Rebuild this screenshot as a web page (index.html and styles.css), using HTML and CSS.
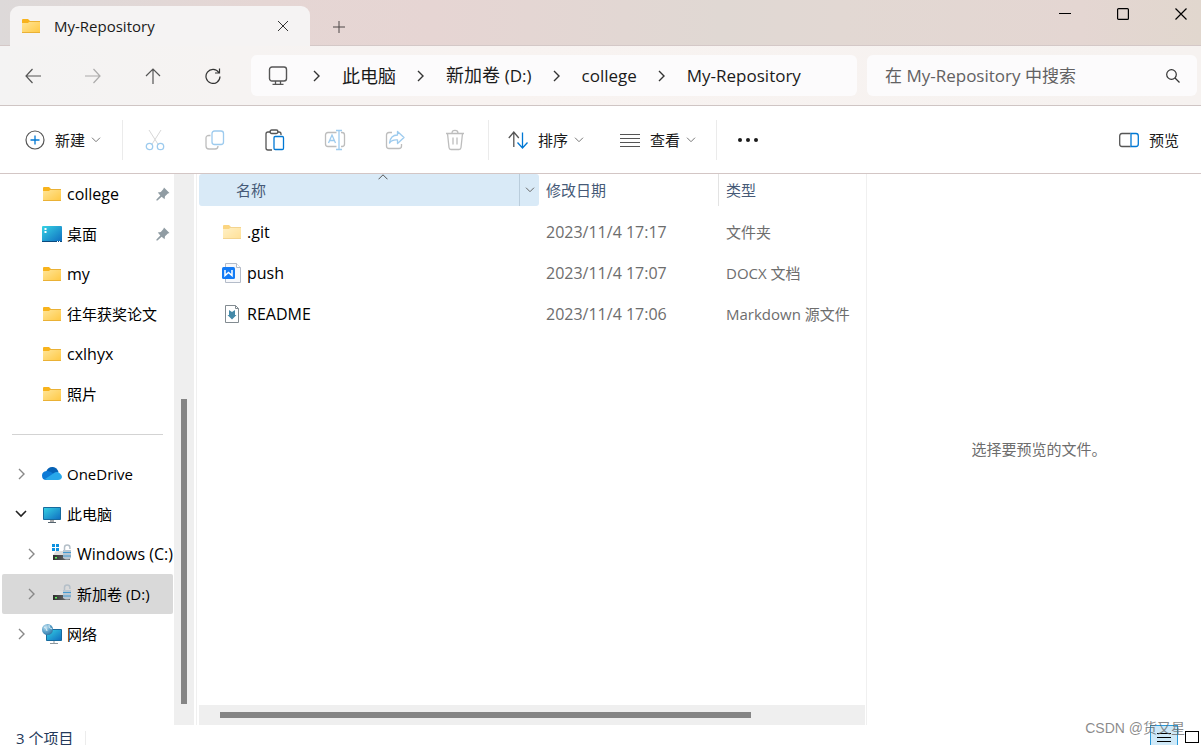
FILE: index.html
```
<!DOCTYPE html>
<html lang="zh-CN">
<head>
<meta charset="utf-8">
<title>My-Repository</title>
<link rel="stylesheet" href="styles.css">
</head>
<body>
<svg class="defs" aria-hidden="true">
  <defs>
    <linearGradient id="gFolder" x1="0" y1="0" x2="1" y2="1"><stop offset="0" stop-color="#ffe69a"/><stop offset="1" stop-color="#ffc843"/></linearGradient>
    <linearGradient id="gBlue" x1="0" y1="0" x2="1" y2="1"><stop offset="0" stop-color="#36d3e4"/><stop offset="1" stop-color="#0f6cc0"/></linearGradient>
    <linearGradient id="gDrive" x1="0" y1="0" x2="1" y2="0"><stop offset="0" stop-color="#2d2d2d"/><stop offset="1" stop-color="#777"/></linearGradient>
    <radialGradient id="gGlobe" cx=".35" cy=".3" r=".8"><stop offset="0" stop-color="#c9e4f2"/><stop offset=".5" stop-color="#5fa4cb"/><stop offset="1" stop-color="#2b6f9f"/></radialGradient>
    <symbol id="folder" viewBox="0 0 20 20"><path d="M1 4q0-1 1-1h5l2 2v3H1z" fill="#f8b31c"/><path d="M1 7h6l2-2h10v12H1z" fill="url(#gFolder)"/><path d="M8 5.5h11M1 16.5h18" stroke="#eab135" fill="none"/></symbol>
    <symbol id="chev" viewBox="0 0 8 12"><path d="M1 1l5 5-5 5" fill="none" stroke="currentColor" stroke-width="1.4"/></symbol>
    <symbol id="down" viewBox="0 0 10 6"><path d="M1 .7l4 4 4-4" fill="none" stroke="currentColor"/></symbol>
    <symbol id="pin" viewBox="0 0 14 14"><path d="M8 .5L13.5 6l-1.6.6L9 9.2l-.4 3L5.6 9.7 1.5 13.6.4 13.6.4 12.5 4.3 8.4 1.8 5.4l3-.4L7.400 2z" fill="#909ca3"/></symbol>
    <symbol id="lock" viewBox="0 0 10 17"><path d="M2.500 7V3.500q0-2.500 2.700-2.500t2.700 2.500V5" fill="none" stroke="#b4bfc8" stroke-width="1.500"/><path d="M1 6h8v8q-4 3-8 0z" fill="#b9c7d3"/><path d="M1 8.500h8M1 12h8" stroke="#459ad0"/></symbol>
    <symbol id="drive" viewBox="0 0 20 20"><path d="M4 7h12l3 4H1z" fill="#dedede"/><path d="M1 11h17v5H1z" fill="url(#gDrive)"/><path d="M3 13h2v1.500H3z" fill="#5ff35f"/><use href="#lock" x="10" y="0" width="10" height="17"/></symbol>
    <symbol id="monitor" viewBox="0 0 20 20"><path d="M1.500 3.500h17v12h-17z" fill="url(#gBlue)" stroke="#176a9e"/><path d="M8 16h4v2H8z" fill="#aaa"/><path d="M6 18.500h8" stroke="#54636e"/></symbol>
  </defs>
</svg>
<div class="window">
  <header class="titlebar">
    <div class="tab">
      <svg class="i20"><use href="#folder"/></svg>
      <span class="tab-title">My-Repository</span>
      <button class="plain tab-close" aria-label="关闭标签页"><svg width="12" height="12" viewBox="0 0 12 12"><path d="M1 1l10 10M11 1L1 11" stroke="#333" fill="none"/></svg></button>
    </div>
    <button class="plain tab-new" aria-label="新标签页"><svg width="12" height="12" viewBox="0 0 12 12"><path d="M6 0v12M0 6h12" stroke="#4d4647" fill="none"/></svg></button>
    <div class="controls">
      <button class="plain" aria-label="最小化"><svg width="12" height="12" viewBox="0 0 12 12"><path d="M0 5.500h12" stroke="#000"/></svg></button>
      <button class="plain" aria-label="最大化"><svg width="12" height="12" viewBox="0 0 12 12"><rect x=".6" y=".6" width="10.800" height="10.800" rx="1" fill="none" stroke="#000" stroke-width="1.200"/></svg></button>
      <button class="plain" aria-label="关闭"><svg width="12" height="12" viewBox="0 0 12 12"><path d="M.5.5l11 11M11.500.5l-11 11" stroke="#000" stroke-width="1.200"/></svg></button>
    </div>
  </header>

  <nav class="navbar">
    <button class="plain nav" aria-label="后退"><svg width="16" height="16" viewBox="0 0 16 16"><path d="M7.500 1L1 8l6.500 7M1 8h15" class="ln"/></svg></button>
    <button class="plain nav faded" aria-label="前进"><svg width="16" height="16" viewBox="0 0 16 16"><path d="M8.500 1L15 8l-6.500 7M15 8H0" class="ln"/></svg></button>
    <button class="plain nav" aria-label="向上"><svg width="16" height="16" viewBox="0 0 16 16"><path d="M1 8l7-7 7 7M8 1v15" class="ln"/></svg></button>
    <button class="plain nav" aria-label="刷新"><svg width="16" height="16" viewBox="0 0 16 16"><path d="M13.800 4.500A7 7 0 1 0 15 8.500M14.500.5v4.500H10" class="ln dark"/></svg></button>
    <div class="address">
      <svg class="i20 pc" viewBox="0 0 20 20"><rect x="1.500" y="1" width="17" height="14" rx="2.500" fill="none" stroke="#555" stroke-width="1.400"/><path d="M7.500 15v3M12.500 15v3M4.500 18.300h11" stroke="#555" stroke-width="1.300"/></svg>
      <svg class="sep"><use href="#chev"/></svg><a class="zh" href="#pc">此电脑</a>
      <svg class="sep"><use href="#chev"/></svg><a class="zh" href="#d">新加卷 <span class="latin">(D:)</span></a>
      <svg class="sep"><use href="#chev"/></svg><a href="#college">college</a>
      <svg class="sep"><use href="#chev"/></svg><a href="#repo">My-Repository</a>
    </div>
    <div class="search">
      <input type="search" placeholder="在 My-Repository 中搜索" aria-label="在 My-Repository 中搜索">
      <svg width="14" height="14" viewBox="0 0 14 14"><circle cx="5.500" cy="5.500" r="4.800" fill="none" stroke="#333" stroke-width="1.200"/><path d="M9 9l4.500 4.500" stroke="#333" stroke-width="1.200"/></svg>
    </div>
  </nav>

  <div class="toolbar">
    <button class="plain tool new"><svg class="i20" viewBox="0 0 20 20"><circle cx="10" cy="10" r="9" fill="none" stroke="#555" stroke-width="1.200"/><path d="M10 5.500v9M5.500 10h9" stroke="#0078d4" stroke-width="1.300"/></svg>新建<svg class="dd"><use href="#down"/></svg></button>
    <span class="rule"></span>
    <button class="plain icon off" aria-label="剪切"><svg class="i22" viewBox="0 0 22 22"><path d="M5 1l9.500 15M17 1L7.500 16" fill="none" stroke="#999"/><circle cx="5.500" cy="17.500" r="3.200" class="bl"/><circle cx="16.500" cy="17.500" r="3.200" class="bl"/></svg></button>
    <button class="plain icon off" aria-label="复制"><svg class="i22" viewBox="0 0 22 22"><path d="M6.500 6.500H5Q2 6.500 2 9v8q0 3 3 3h6q3 0 3-3" class="gr"/><rect x="8" y="2" width="11.500" height="13.500" rx="2.500" class="bl"/></svg></button>
    <button class="plain icon" aria-label="粘贴"><svg class="i22" viewBox="0 0 22 22"><path d="M7 3H4q-2 0-2 2v14q0 2 2 2h4M13 3h2q2 0 2 2v1" class="gr"/><rect x="6" y="1" width="8" height="3.500" rx="1.700" class="gr"/><rect x="10" y="7.500" width="9.500" height="13" rx="1.200" class="bl"/></svg></button>
    <button class="plain icon off" aria-label="重命名"><svg class="i22" viewBox="0 0 22 22"><path d="M12.500 3.500H4Q1.500 3.500 1.500 6v9q0 2.500 2.500 2.500h8.500M17 3.500h1q2.500 0 2.500 2.500v9q0 2.500-2.500 2.500h-1" class="gr"/><path d="M4.500 14L8 6l3.500 8M5.700 11.500h4.600M12 1.500h6M15 1.500v19M12 20.500h6" class="bl"/></svg></button>
    <button class="plain icon off" aria-label="共享"><svg class="i22" viewBox="0 0 22 22"><path d="M8 3.500H5Q2.500 3.500 2.500 6v11q0 2.500 2.500 2.500h10q2.500 0 2.500-2.500v-2" class="gr"/><path d="M13.500 2.500l6.500 6-6.500 6V11Q8 10.500 5.500 14 6.500 6 13.500 6z" class="bl" stroke-linejoin="round"/></svg></button>
    <button class="plain icon off" aria-label="删除"><svg class="i22" viewBox="0 0 22 22"><path d="M2 4.500h18M8 4q0-2.700 3-2.700T14 4M3.500 4.500l1.500 14q.2 2 2 2h8q1.800 0 2-2l1.500-14M9 8.500v7M13 8.500v7" class="gr"/></svg></button>
    <span class="rule second"></span>
    <button class="plain tool sort"><svg class="i20" viewBox="0 0 20 20"><path d="M.8 8l5-6 5 6M5.800 2v15" fill="none" stroke="#555" stroke-width="1.300"/><path d="M9.500 12.500l5 5.500 5-5.500M14.500 18V2.500" fill="none" stroke="#0078d4" stroke-width="1.300"/></svg>排序<svg class="dd"><use href="#down"/></svg></button>
    <button class="plain tool arrange"><svg class="i20" viewBox="0 0 20 20"><path d="M0 4.500h20M0 8.500h20M0 12.500h20M0 16.500h20" stroke="#555"/></svg>查看<svg class="dd"><use href="#down"/></svg></button>
    <span class="rule"></span>
    <button class="plain more" aria-label="更多"><svg width="22" height="6" viewBox="0 0 22 6"><g fill="#1b1b1b"><circle cx="3" cy="3" r="2"/><circle cx="11" cy="3" r="2"/><circle cx="19" cy="3" r="2"/></g></svg></button>
    <button class="plain tool preview-toggle"><svg class="i20" viewBox="0 0 20 20"><path d="M11.500 3.500H3Q.7 3.500.7 6v8q0 2.500 2.300 2.500h8.500" fill="none" stroke="#555" stroke-width="1.300"/><path d="M12 3.500h5q2.300 0 2.300 2.500v8q0 2.500-2.300 2.500h-5z" fill="none" stroke="#0078d4" stroke-width="1.300"/></svg>预览</button>
  </div>

  <main class="body">
    <aside class="side">
      <ul class="tree">
        <li><svg class="i20"><use href="#folder"/></svg><span class="en">college</span><svg class="pin"><use href="#pin"/></svg></li>
        <li><svg class="i20" viewBox="0 0 20 20"><rect y="2" width="20" height="16" rx="1" fill="url(#gBlue)"/><path d="M0 17.500h20" stroke="#0b4a7e"/><path d="M2.500 5h2M2.500 8h2" stroke="#fff" stroke-width="2"/><path d="M15 17.500h1M17 17.500h1" stroke="#fff"/></svg><span>桌面</span><svg class="pin"><use href="#pin"/></svg></li>
        <li><svg class="i20"><use href="#folder"/></svg><span class="en">my</span></li>
        <li><svg class="i20"><use href="#folder"/></svg><span>往年获奖论文</span></li>
        <li><svg class="i20"><use href="#folder"/></svg><span class="en">cxlhyx</span></li>
        <li><svg class="i20"><use href="#folder"/></svg><span>照片</span></li>
      </ul>
      <hr class="split">
      <ul class="tree">
        <li><svg class="arrow"><use href="#chev"/></svg><svg class="i20" viewBox="0 0 20 20"><path d="M4 8Q6 2.500 11 3q4 .5 5.500 5L9 13z" fill="#0561b5"/><path d="M4.500 16Q0 16 0 11.500 0 7.500 4.500 7 8 6.500 13 11l-6 5z" fill="#0d7ad6"/><path d="M3 15l9-6q3-2 6 .5 2 1.500 2 3.500-.5 3-4 3H5z" fill="#28a8ea"/></svg><span>OneDrive</span></li>
        <li><svg class="arrow open" viewBox="0 0 12 8"><path d="M1 1l5 5 5-5" fill="none" stroke="#222" stroke-width="1.600"/></svg><svg class="i20"><use href="#monitor"/></svg><span>此电脑</span></li>
        <li class="child"><svg class="arrow"><use href="#chev"/></svg><svg class="i20" viewBox="0 0 20 20"><use href="#drive" width="20" height="20"/><path d="M0 0h3v3H0zM4 0h3v3H4zM0 4h3v3H0zM4 4h3v3H4z" fill="#0c91e0"/></svg><span class="en">Windows (C:)</span></li>
        <li class="child selected"><svg class="arrow"><use href="#chev"/></svg><svg class="i20"><use href="#drive"/></svg><span>新加卷 (D:)</span></li>
        <li><svg class="arrow"><use href="#chev"/></svg><svg class="i20" viewBox="0 0 20 20"><path d="M4.500 5.500h15v11h-15z" fill="url(#gBlue)" stroke="#176a9e"/><path d="M12 17v2M8 19.500h8" stroke="#8c979e"/><circle cx="5.500" cy="5.500" r="5.500" fill="url(#gGlobe)"/><path d="M2 3q3 1 3 4M7 1q-1 3 3 4" stroke="#d8edf6" fill="none"/></svg><span>网络</span></li>
      </ul>
    </aside>
    <div class="vbar"><div class="vthumb"></div></div>
    <section class="list">
      <table class="files">
        <colgroup><col class="c-name"><col class="c-date"><col></colgroup>
        <thead>
          <tr>
            <th class="sorted"><div class="head"><span>名称</span><svg class="asc" viewBox="0 0 10 6"><path d="M.5 5.300L5 .8l4.500 4.500" fill="none" stroke="#555"/></svg><button class="plain filter" aria-label="筛选"><svg class="fd"><use href="#down"/></svg></button></div></th>
            <th class="lined">修改日期</th>
            <th>类型</th>
          </tr>
        </thead>
        <tbody>
          <tr><td class="en"><div class="file"><svg class="i20 hidden-file"><use href="#folder"/></svg>.git</div></td><td class="en">2023/11/4 17:17</td><td>文件夹</td></tr>
          <tr><td class="en"><div class="file"><svg class="i20" viewBox="0 0 20 20"><path d="M3.500.5h11l4 4v15h-15z" fill="#f7f8fb" stroke="#b4bcc9"/><path d="M14.500.5v4h4" fill="#fff" stroke="#b4bcc9"/><rect x="0" y="4" width="13" height="12" rx="1.500" fill="#137bf5"/><path d="M3 7v5.500l3.500-3 3.500 3V7" fill="none" stroke="#fff" stroke-width="1.500"/></svg>push</div></td><td class="en">2023/11/4 17:07</td><td>DOCX 文档</td></tr>
          <tr><td class="en"><div class="file"><svg class="i20" viewBox="0 0 20 20"><path d="M3.500 1.500h10l3 3v14h-13z" fill="#fff" stroke="#828b91"/><path d="M13.500 1.500v3h3" fill="none" stroke="#828b91"/><path d="M7 6l3 2 3-2v5h1.500L10 15.500 5.500 11H7z" fill="#4489a8"/></svg>README</div></td><td class="en">2023/11/4 17:06</td><td>Markdown 源文件</td></tr>
        </tbody>
      </table>
      <div class="hbar"><div class="hthumb"></div></div>
    </section>
    <section class="preview">选择要预览的文件。</section>
  </main>

  <footer class="status">
    <span class="count">3 个项目</span>
    <button class="plain view on" aria-label="详细信息"><svg width="16" height="16" viewBox="0 0 16 16"><path d="M1 1.500h14M1 5.500h14M1 9.500h14" stroke="#000"/></svg></button>
    <button class="plain view" aria-label="大图标"><svg width="14" height="12" viewBox="0 0 14 12"><rect x=".5" y=".5" width="13" height="11" fill="#fff" stroke="#000"/></svg></button>
    <span class="mark">CSDN @货又星</span>
  </footer>
</div>
</body>
</html>
```
FILE: styles.css
```
* { box-sizing: border-box; }
body {
  margin: 0;
  font: 15px/20px "Open Sans", "Noto Sans CJK SC", sans-serif;
  color: #000;
}
.defs { position: absolute; width: 0; height: 0; }
.window { display: flex; flex-direction: column; height: 100vh; overflow: hidden; background: #fff; }
.plain {
  display: flex; align-items: center; justify-content: center;
  border: 0; padding: 0; background: none; font: inherit; color: inherit;
}
svg { flex: none; }
.i20 { width: 20px; height: 20px; }
.i22 { width: 22px; height: 22px; }
.en { font-size: 16px; }
ul { list-style: none; margin: 0; padding: 0; }

.titlebar {
  display: flex; flex: none; height: 46px; padding-left: 10px;
  background: linear-gradient(90deg, #ddd9d9, #e5d6d4 22%, #e6d5d3 36%, #e0d8d3 60%, #e2d8d3 70%, #e4d6d2 90%, #e1d7ce);
  border-bottom: 1px solid #d4c8c7;
}
.tab {
  display: flex; align-items: center; width: 300px; height: 40px; margin-top: 6px; padding: 0 12px 0 11px;
  background: #f5f3f3; border-radius: 9px 9px 0 0;
}
.tab-title { flex: 1; padding-left: 13px; color: #1a1a1a; font-weight: 500; }
.tab-close { width: 30px; height: 30px; }
.tab-new { width: 38px; margin: 8px 0 0 10px; }
.controls { display: flex; margin-left: auto; margin-right: -9px; height: 28px; }
.controls button { width: 58px; }

.navbar {
  display: flex; align-items: center; flex: none; height: 60px; padding: 0 4px 0 3px;
  background: linear-gradient(90deg, #f4f3f3, #f8f3f1 40%, #f6f2f0);
  border-bottom: 1px solid #cfc5c4;
}
.nav { width: 60px; height: 40px; }
.ln { fill: none; stroke: #555; stroke-width: 1.2; }
.dark { stroke: #333; }
.faded { opacity: .45; }
.address, .search { display: flex; align-items: center; height: 41px; background: #fcfbfc; border-radius: 6px; }
.address { flex: 1 1 606px; min-width: 0; gap: 21px; margin: 0 10px 0 8px; padding-left: 17px; font-size: 17px; white-space: nowrap; overflow: hidden; }
.address a { color: #1a1a1a; text-decoration: none; }
.address .zh { font-size: 18px; }
.address .latin { font-size: 17px; }
.pc { margin-right: 4px; }
.sep { width: 8px; height: 12px; color: #333; }
.search { flex: 1 1 330px; min-width: 0; padding: 0 17px 0 18px; }
.search input { flex: 1; min-width: 0; border: 0; padding: 0; background: none; outline: 0; font: inherit; font-size: 17px; }
.search input::placeholder { color: #626162; opacity: 1; }

.toolbar { display: flex; align-items: center; flex: none; height: 68px; padding: 0 22px 0 25px; border-bottom: 1px solid #d3c6c5; }
.tool { gap: 10px; color: #1a1a1a; white-space: nowrap; }
.new { margin-right: 21px; }
.dd { width: 10px; height: 6px; margin-left: -4px; color: #777; }
.rule { width: 1px; height: 40px; margin-right: 2px; background: #ebebeb; }
.second { margin-left: 3px; }
.icon { width: 60px; height: 40px; }
.gr { fill: none; stroke: #555; stroke-width: 1.3; }
.bl { fill: none; stroke: #0078d4; stroke-width: 1.3; }
.off { opacity: .38; }
.sort { margin: 0 36px 0 17px; }
.arrange { margin-right: 20px; }
.more { margin-left: 18px; }
.preview-toggle { margin-left: auto; }

.body { display: flex; flex: 1; min-height: 0; }
.side { flex: 0 0 174px; overflow: hidden; }
.tree li { display: flex; align-items: center; height: 40px; padding-left: 42px; position: relative; white-space: nowrap; }
.tree span { padding-left: 5px; }
.tree .child { padding-left: 52px; }
.selected { margin: 0 1px 0 2px; background: #d9d9d9; border-radius: 2px; }
.tree .selected { padding-left: 50px; }
.arrow { position: absolute; left: 18px; width: 8px; height: 12px; color: #888; }
.arrow.open { left: 15px; width: 12px; height: 8px; }
.child .arrow { left: 28px; }
.selected .arrow { left: 26px; }
.pin { width: 14px; height: 14px; margin: 0 4px 0 auto; }
.split { height: 1px; border: 0; margin: 20px 11px 19px 12px; background: #d3d3d3; }
.vbar { flex: 0 0 20px; display: grid; grid-template-rows: 225fr 305fr 21fr; justify-content: center; background: #efefef; }
.vthumb { grid-row: 2; width: 6px; background: #858585; }

.list { flex: 2 1 671px; min-width: 0; display: flex; flex-direction: column; justify-content: space-between; margin-left: 2px; padding-left: 2px; border-left: 1px solid #f0f0f0; border-right: 1px solid #f0f0f0; }
.files { width: 100%; table-layout: fixed; border-collapse: separate; border-spacing: 0; }
.c-name { width: 340px; }
.c-date { width: 180px; }
.files th { height: 32px; padding: 0 0 0 7px; font-weight: 400; text-align: left; color: #465a77; }
.files .sorted { padding: 0; background: #d9eaf7; border-radius: 3px; }
.head { position: relative; display: flex; align-items: center; height: 32px; padding-left: 37px; }
.asc { position: absolute; left: 179px; top: 0; width: 10px; height: 6px; }
.filter { width: 20px; height: 32px; margin-left: auto; border-left: 1px solid #bacddc; color: #666; }
.fd { width: 10px; height: 6px; }
.files .lined { border-right: 1px solid #e3e3e3; }
.files tbody::before { content: ""; display: block; height: 5px; }
.files td { height: 41px; padding: 0 0 0 7px; color: #6d6d6d; white-space: nowrap; }
.files td:first-child { padding-left: 23px; color: #000; }
.file { display: flex; align-items: center; gap: 5px; }
.hidden-file { opacity: .55; }
.hbar { display: grid; grid-template-columns: 21fr 531fr 114fr; align-items: center; height: 20px; margin-right: 1px; background: #efefef; }
.hthumb { grid-column: 2; height: 6px; background: #858585; }
.preview { flex: 1 1 334px; display: flex; align-items: center; justify-content: center; padding: 0 0 2px 10px; color: #6d6d6d; }

.status { position: relative; display: flex; align-items: flex-start; flex: none; height: 20px; padding: 0 1px 0 16px; }
.count { margin: 6px auto 0 0; padding-right: 12px; line-height: 14px; color: #24395a; border-right: 1px solid #ececec; }
.view { width: 16px; height: 20px; padding-top: 4px; }
.on { width: 28px; margin-right: 6px; padding-top: 9px; background: #cfe9f8; border: 1px solid #2a9bdc; border-bottom: 0; }
.mark { position: absolute; right: 16px; bottom: 7px; font-family: "Liberation Sans", "Noto Sans CJK SC", sans-serif; font-size: 14px; color: rgba(100, 100, 100, .75); }
```
